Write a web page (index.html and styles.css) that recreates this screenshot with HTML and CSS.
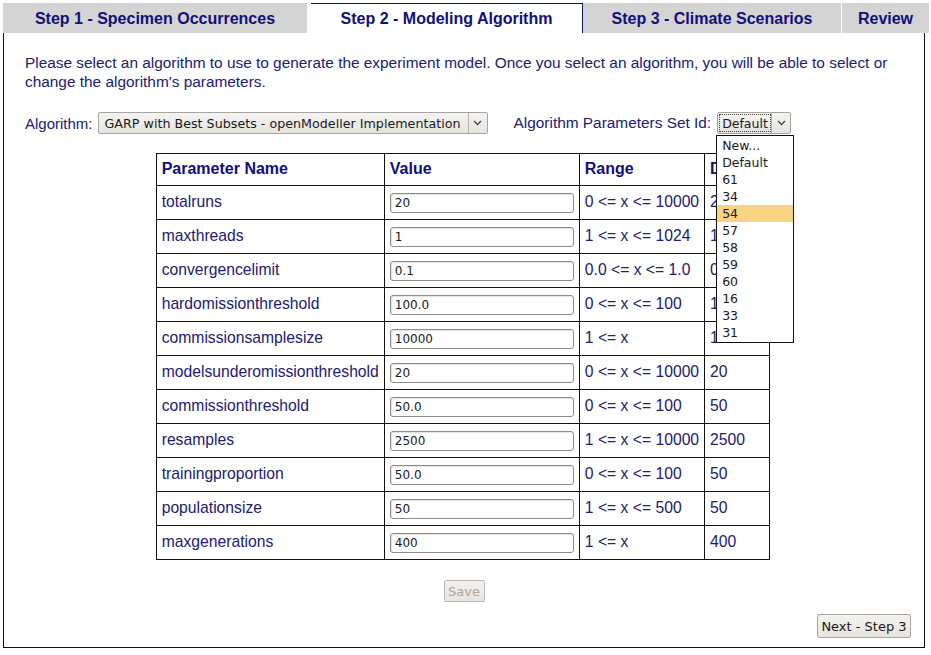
FILE: index.html
```html
<!DOCTYPE html>
<html>
<head>
<meta charset="utf-8">
<title>Modeling Algorithm</title>
<link rel="stylesheet" href="styles.css">
</head>
<body>
<div class="wrap">
  <div class="tabs">
    <div class="tab tab-1">Step 1 - Specimen Occurrences</div>
    <div class="tab tab-2 active">Step 2 - Modeling Algorithm</div>
    <div class="tab tab-3">Step 3 - Climate Scenarios</div>
    <div class="tab tab-4">Review</div>
  </div>
  <div class="panel">
    <p class="intro">Please select an algorithm to use to generate the experiment model. Once you select an algorithm, you will be able to select or change the algorithm's parameters.</p>
    <div class="algo-row">
      <span class="label">Algorithm:</span>
      <div class="select select-algo">
        <span class="select-text">GARP with Best Subsets - openModeller Implementation</span>
        <span class="select-arrow"><svg width="9" height="6" viewBox="0 0 9 6"><path d="M1 1 L4.5 4.5 L8 1" fill="none" stroke="#444" stroke-width="1.3"/></svg></span>
      </div>
      <span class="label label-set">Algorithm Parameters Set Id:</span>
      <div class="select select-set">
        <span class="select-text focus">Default</span>
        <span class="select-arrow"><svg width="9" height="6" viewBox="0 0 9 6"><path d="M1 1 L4.5 4.5 L8 1" fill="none" stroke="#444" stroke-width="1.3"/></svg></span>
        <ul class="dropdown">
          <li>New...</li>
          <li>Default</li>
          <li>61</li>
          <li>34</li>
          <li class="hl">54</li>
          <li>57</li>
          <li>58</li>
          <li>59</li>
          <li>60</li>
          <li>16</li>
          <li>33</li>
          <li>31</li>
        </ul>
      </div>
    </div>
    <table class="params">
      <colgroup>
        <col class="c1"><col class="c2"><col class="c3"><col class="c4">
      </colgroup>
      <thead>
        <tr><th>Parameter Name</th><th>Value</th><th>Range</th><th>Default</th></tr>
      </thead>
      <tbody>
        <tr><td>totalruns</td><td class="vcell"><input class="field" type="text" value="20"></td><td>0 &lt;= x &lt;= 10000</td><td>20</td></tr>
        <tr><td>maxthreads</td><td class="vcell"><input class="field" type="text" value="1"></td><td>1 &lt;= x &lt;= 1024</td><td>1</td></tr>
        <tr><td>convergencelimit</td><td class="vcell"><input class="field" type="text" value="0.1"></td><td>0.0 &lt;= x &lt;= 1.0</td><td>0.1</td></tr>
        <tr><td>hardomissionthreshold</td><td class="vcell"><input class="field" type="text" value="100.0"></td><td>0 &lt;= x &lt;= 100</td><td>100</td></tr>
        <tr><td>commissionsamplesize</td><td class="vcell"><input class="field" type="text" value="10000"></td><td>1 &lt;= x</td><td>10000</td></tr>
        <tr><td>modelsunderomissionthreshold</td><td class="vcell"><input class="field" type="text" value="20"></td><td>0 &lt;= x &lt;= 10000</td><td>20</td></tr>
        <tr><td>commissionthreshold</td><td class="vcell"><input class="field" type="text" value="50.0"></td><td>0 &lt;= x &lt;= 100</td><td>50</td></tr>
        <tr><td>resamples</td><td class="vcell"><input class="field" type="text" value="2500"></td><td>1 &lt;= x &lt;= 10000</td><td>2500</td></tr>
        <tr><td>trainingproportion</td><td class="vcell"><input class="field" type="text" value="50.0"></td><td>0 &lt;= x &lt;= 100</td><td>50</td></tr>
        <tr><td>populationsize</td><td class="vcell"><input class="field" type="text" value="50"></td><td>1 &lt;= x &lt;= 500</td><td>50</td></tr>
        <tr><td>maxgenerations</td><td class="vcell"><input class="field" type="text" value="400"></td><td>1 &lt;= x</td><td>400</td></tr>
      </tbody>
    </table>
    <div class="save-row"><button class="btn btn-save" disabled>Save</button></div>
    <div class="next-row"><button class="btn btn-next">Next - Step 3</button></div>
  </div>
</div>
</body>
</html>
```

FILE: styles.css
```css
html, body {
  margin: 0;
  padding: 0;
  background: #ffffff;
}

body {
  font-family: "Liberation Sans", Arial, sans-serif;
  color: #1c1c6e;
}

.wrap {
  padding: 3px 2px 0 3px;
  width: 926px;
}

.tabs {
  display: flex;
  height: 30px;
}

.tab {
  display: flex;
  align-items: center;
  justify-content: center;
  background: #d4d4d4;
  color: #10107a;
  font-weight: bold;
  font-size: 16px;
  box-sizing: border-box;
  padding-top: 1px;
  white-space: nowrap;
}

.tab-1 {
  width: 304px;
  margin-right: 4px;
}

.tab-2 {
  width: 272px;
}

.tab-3 {
  width: 258px;
  margin-right: 1px;
}

.tab-4 {
  width: 87px;
}

.tab.active {
  background: #ffffff;
  border-top: 1px solid #10106e;
  border-right: 1px solid #10106e;
  padding-top: 0;
}

.panel {
  border-left: 1px solid #111;
  border-right: 1px solid #111;
  border-bottom: 1px solid #111;
  width: 922px;
  height: 615px;
  padding-top: 20px;
  box-sizing: border-box;
}

.intro {
  margin: 0 21px 0 21px;
  font-size: 15.4px;
  line-height: 19px;
  color: #20206e;
}

.algo-row {
  display: flex;
  align-items: center;
  margin: 21px 0 0 21px;
  height: 22px;
}

.label {
  font-size: 15px;
  color: #20206e;
  white-space: nowrap;
}

.label-set {
  margin-left: 26px;
  font-size: 15.4px;
}

.select {
  position: relative;
  display: flex;
  align-items: stretch;
  height: 22px;
  box-sizing: border-box;
  border: 1px solid #a8a5a0;
  border-radius: 2px;
  background: linear-gradient(#f4f3f1, #e6e4e0);
  font-family: "DejaVu Sans", sans-serif;
  font-size: 12.7px;
  color: #1a1a1a;
  flex: none;
}

.select-algo {
  width: 390px;
  margin-left: 5px;
}

.select-set {
  width: 74px;
  margin-left: 6px;
}

.select-text {
  flex: 1;
  display: flex;
  align-items: center;
  padding-left: 6px;
  white-space: nowrap;
  overflow: hidden;
}

.select-set .select-text {
  margin: 2px 1px 2px 2px;
  padding-left: 2px;
  font-size: 12.5px;
  outline: 1px dotted #444;
}

.select-arrow {
  width: 18px;
  display: flex;
  align-items: center;
  justify-content: center;
  border-left: 1px solid #b5b2ad;
}

.dropdown {
  position: absolute;
  top: 22px;
  left: -2px;
  width: 78px;
  margin: 0;
  padding: 1px 0 1px 0;
  list-style: none;
  background: #ffffff;
  border: 1px solid #111;
  box-sizing: border-box;
  z-index: 5;
  font-size: 12.5px;
  color: #1a1a1a;
}

.dropdown li {
  height: 17px;
  line-height: 17px;
  padding-left: 5px;
}

.dropdown li.hl {
  background: #f8d381;
}

.params {
  border-collapse: collapse;
  margin: 19px auto 0 auto;
  width: 614px;
  position: relative;
  left: -1px;
}

.params col.c1 { width: 227px; }
.params col.c2 { width: 197px; }
.params col.c3 { width: 123px; }
.params col.c4 { width: 67px; }

.params th,
.params td {
  border: 1px solid #111;
  text-align: left;
  white-space: nowrap;
  box-sizing: border-box;
}

.params th {
  height: 32px;
  padding: 0 5px 1px 5px;
  font-weight: bold;
  font-size: 16px;
  color: #10107a;
}

.params td {
  height: 34px;
  padding: 0 5px 2px 5px;
  font-size: 15.7px;
  color: #20206e;
}

.params td.vcell {
  padding: 0 5px;
}

.field {
  width: 184px;
  height: 20px;
  box-sizing: border-box;
  margin: 0;
  padding: 0 4px;
  border: 1px solid #8e8c88;
  border-radius: 3px;
  box-shadow: inset 1px 1px 1px rgba(0,0,0,0.12);
  font-family: "DejaVu Sans", sans-serif;
  font-size: 12px;
  color: #1a1a1a;
  display: block;
}

.save-row {
  display: flex;
  justify-content: center;
  margin-top: 20px;
}

.next-row {
  display: flex;
  justify-content: flex-end;
  margin: 12px 13px 0 0;
}

.btn {
  font-family: "DejaVu Sans", sans-serif;
  font-size: 13px;
  border-radius: 2px;
  background: linear-gradient(#f3f1ee, #e8e5e1);
  margin: 0;
}

.btn-save {
  width: 41px;
  height: 22px;
  padding: 0;
  border: 1px solid #bbb7b1;
  color: #a8a5a0;
}

.btn-next {
  width: 94px;
  height: 24px;
  padding: 0;
  border: 1px solid #a9a59f;
  color: #1a1a1a;
}
```
